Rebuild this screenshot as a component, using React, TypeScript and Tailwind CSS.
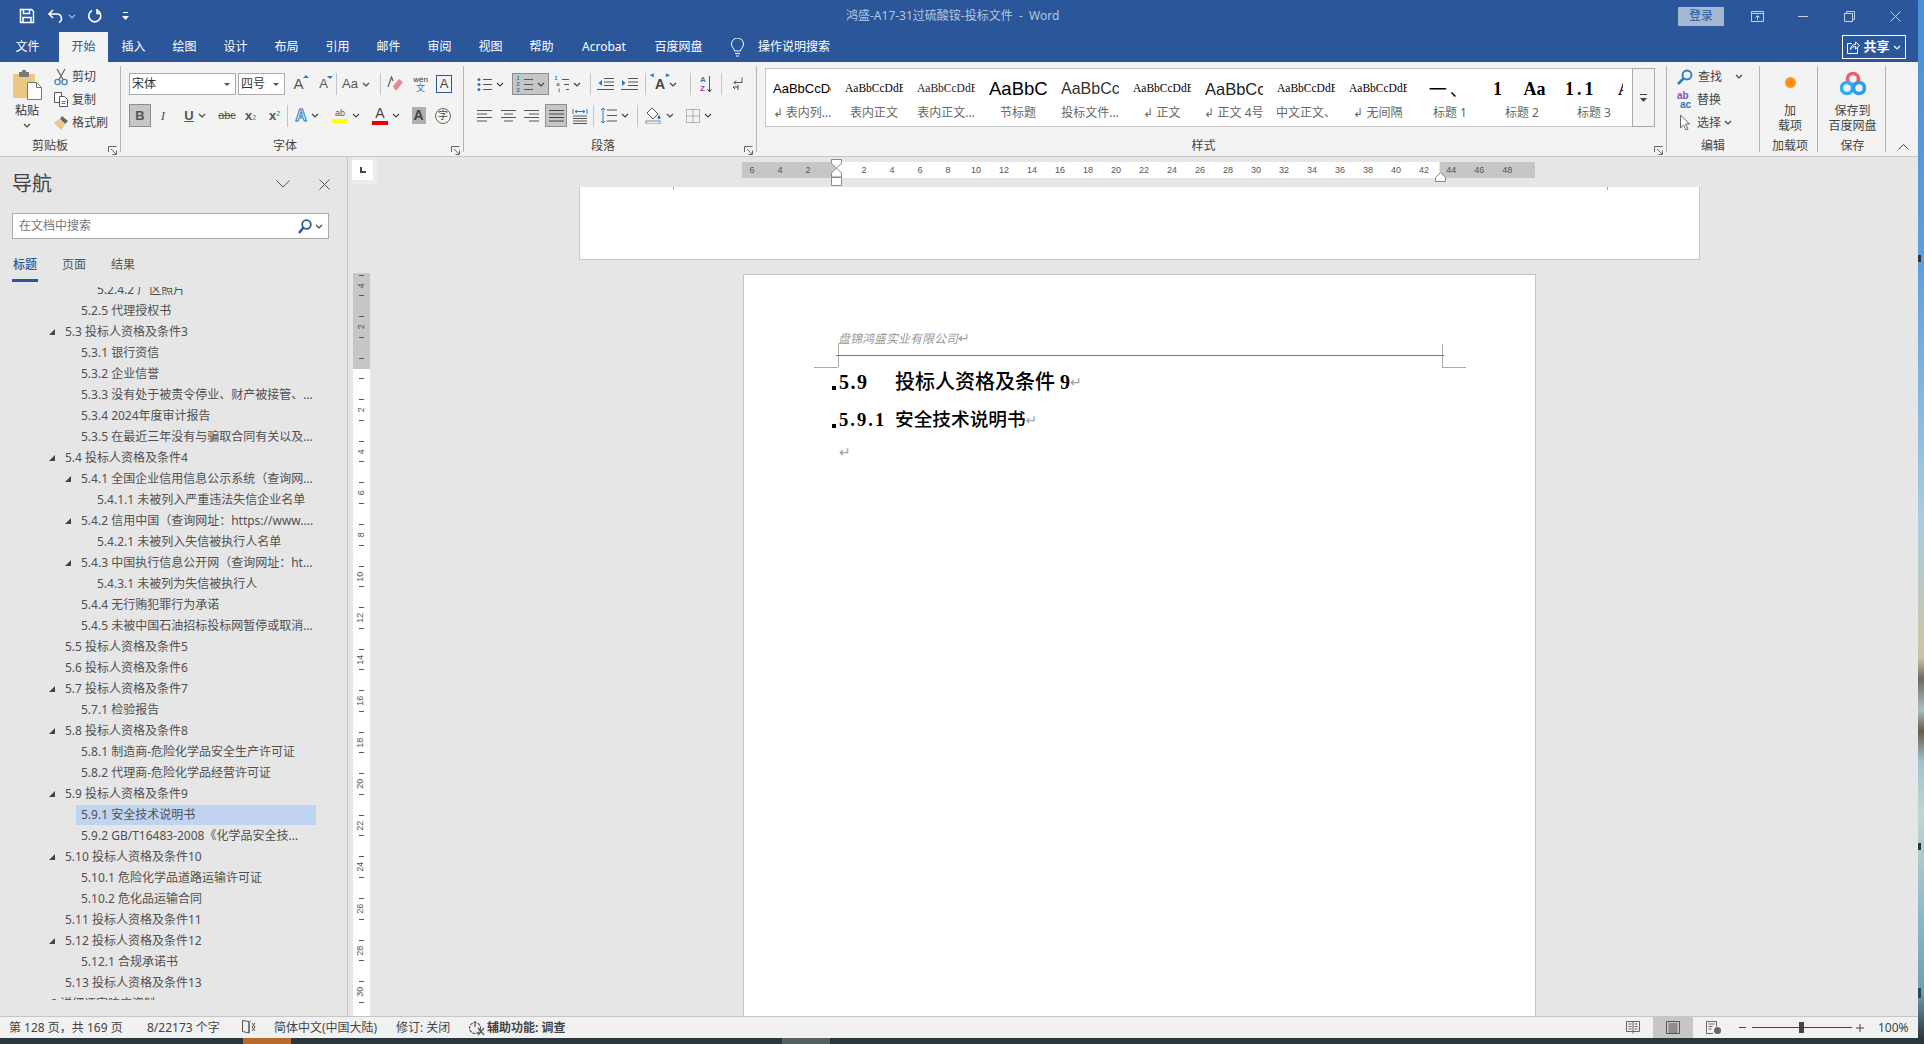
import React from 'react';

const UI = "[font-family:'Noto_Sans','Noto_Sans_CJK_SC',sans-serif]";
const ARIAL = "[font-family:'Liberation_Sans','Noto_Sans_CJK_SC',sans-serif]";
const SERIF = "[font-family:'Liberation_Serif','Noto_Sans_CJK_SC',serif]";

const Chev = ({ color = '#444' }: { color?: string }) => (
  <svg width="8" height="5" viewBox="0 0 8 5" className="shrink-0" fill="none" stroke={color} strokeWidth="1.2">
    <path d="M1 1l3 3 3-3" />
  </svg>
);

const Launcher = () => (
  <svg width="9" height="9" viewBox="0 0 9 9" fill="none" stroke="#666" strokeWidth="1">
    <path d="M.5 6V.5H8.5M3 3l5 5M8.5 4.5v4h-4" />
  </svg>
);

const Sep = () => <div className="w-px h-[22px] bg-[#c6c6c6] shrink-0" />;

const Slot = ({ className, children }: { className: string; children: React.ReactNode }) => (
  <div className={`flex items-center justify-center shrink-0 h-full gap-[4px] ${className}`}>{children}</div>
);

const Lines = ({ rows, color = '#555' }: { rows: string[]; color?: string }) => (
  <svg width="17" height="15" viewBox="0 0 17 15" fill="none" stroke={color} strokeWidth="1">
    {rows.map((d, i) => <path key={i} d={d} />)}
  </svg>
);

const Group = ({ width, label, labelClass = '', launcher, children }: { width: string; label: string; labelClass?: string; launcher?: boolean; children: React.ReactNode }) => (
  <div className="flex shrink-0">
    <div className={`relative flex flex-col ${width}`}>
      <div className="h-[75px]">{children}</div>
      <div className={`h-[18px] flex items-center justify-center text-[12px] text-[#444] ${labelClass}`}>{label}</div>
      {launcher && <div className="absolute right-[3px] bottom-[1px]"><Launcher /></div>}
    </div>
    <div className="w-px my-[4px] bg-[#b4b4b4]" />
  </div>
);

const TitleBar = () => (
  <div className="h-[32px] flex items-center text-white shrink-0">
    <Slot className="w-[18px] ml-[18px]">
      <svg width="16" height="16" viewBox="0 0 16 16" fill="none" stroke="#fff" strokeWidth="1.5">
        <path d="M1.5 1.5h11l2 2v11h-13zM4.5 1.5v4h6v-4M4 14.5v-5h8v5" />
      </svg>
    </Slot>
    <Slot className="w-[18px] ml-[10px]">
      <svg width="17" height="16" viewBox="0 0 17 16" fill="none" stroke="#fff" strokeWidth="1.6">
        <path d="M6 2L2 6l4 4M2 6h8a4.500 4.500 0 0 1 2 8.500" />
      </svg>
    </Slot>
    <Slot className="w-[8px] ml-[4px]"><Chev color="#a9bcd8" /></Slot>
    <Slot className="w-[18px] ml-[10px]">
      <svg width="16" height="16" viewBox="0 0 16 16" fill="none" stroke="#fff" strokeWidth="1.6">
        <path d="M5 2.500a6 6 0 1 0 5.500 0M10 1v4.500h4" />
      </svg>
    </Slot>
    <Slot className="w-[8px] ml-[17px]">
      <svg width="7" height="8" viewBox="0 0 7 8" fill="#fff"><path d="M1 0h5v1H1zM0 4h7L3.500 8z" /></svg>
    </Slot>
    <div className="ml-[717px] text-[12px] text-[#b4c5de] whitespace-pre">鸿盛-A17-31过硫酸铵-投标文件  -  Word</div>
    <div className="ml-auto mr-[10px] w-[46px] h-[19px] rounded-[1px] bg-[#a4b8d4] text-[#2b579a] text-[12px] flex items-center justify-center">登录</div>
    <Slot className="w-[46px]">
      <svg width="13" height="11" viewBox="0 0 13 11" fill="none" stroke="#c6d3e6"><path d="M.5.500h12v10H.500zM.5 2.500h12M6.500 9V5M4.500 6.500l2-2 2 2" /></svg>
    </Slot>
    <Slot className="w-[46px]"><div className="w-[10px] h-px bg-[#c6d3e6]" /></Slot>
    <Slot className="w-[46px]">
      <svg width="11" height="11" viewBox="0 0 11 11" fill="none" stroke="#c6d3e6"><path d="M.5 2.500h8v8h-8zM2.500 2.500v-2h8v8h-2" /></svg>
    </Slot>
    <Slot className="w-[46px]">
      <svg width="11" height="11" viewBox="0 0 11 11" fill="none" stroke="#c6d3e6"><path d="M.5.500l10 10M10.500.500l-10 10" /></svg>
    </Slot>
  </div>
);

const tabs = [
  { name: '插入', w: 'w-[51px]' }, { name: '绘图', w: 'w-[51px]' }, { name: '设计', w: 'w-[51px]' },
  { name: '布局', w: 'w-[51px]' }, { name: '引用', w: 'w-[51px]' }, { name: '邮件', w: 'w-[51px]' },
  { name: '审阅', w: 'w-[51px]' }, { name: '视图', w: 'w-[51px]' }, { name: '帮助', w: 'w-[51px]' },
  { name: 'Acrobat', w: 'w-[74px]' }, { name: '百度网盘', w: 'w-[75px]' },
];

const TabBar = () => (
  <div className="h-[30px] flex items-stretch text-white text-[12px] shrink-0">
    <div className="w-[51px] ml-[2px] mr-[6px] flex items-center justify-center">文件</div>
    <div className="w-[49px] bg-[#f3f3f3] text-[#2b579a] flex items-center justify-center">开始</div>
    {tabs.map(t => <div key={t.name} className={`${t.w} flex items-center justify-center`}>{t.name}</div>)}
    <div className="ml-[15px] flex items-center">
      <svg width="13" height="19" viewBox="0 0 13 19" fill="none" stroke="#fff">
        <path d="M3.500 13c0-2.500-3-3.500-3-7a6 6 0 0 1 12 0c0 3.500-3 4.500-3 7zM4 15.500h5M5 18h3" />
      </svg>
    </div>
    <div className="ml-[14px] flex items-center">操作说明搜索</div>
    <div className="ml-auto mr-[12px] self-center w-[64px] h-[24px] border border-white flex items-center justify-center gap-[3px] font-bold text-[13px]">
      <svg width="13" height="14" viewBox="0 0 13 14" fill="none" stroke="#fff"><path d="M5 3.500H.5v10h10V8M3.500 9.500c0-3.500 2.500-5 5-5V2l4 3.500-4 3.500V6.500c-2 0-4 1-5 3z" /></svg>
      <span>共享</span>
      <Chev color="#fff" />
    </div>
  </div>
);

const ClipboardGroup = () => (
  <Group width="w-[120px]" label="剪贴板" labelClass="pr-[20px]" launcher>
    <div className="flex h-full">
      <div className="w-[54px] flex flex-col items-center pt-[8px]">
        <svg width="29" height="30" viewBox="0 0 29 30">
          <rect x="0" y="4" width="22" height="24" rx="1" fill="#eac883" />
          <rect x="6" y="2" width="10" height="5" fill="#7b7b7b" />
          <rect x="9" y="0" width="4" height="3" fill="#7b7b7b" />
          <path d="M14.500 12.500h9l5 5v12h-14z" fill="#fff" stroke="#777" />
          <path d="M23.500 12.500v5h5" fill="none" stroke="#777" />
        </svg>
        <div className="text-[12px] text-[#333] mt-[3px] leading-[16px]">粘贴</div>
        <div className="mt-[4px]"><Chev /></div>
      </div>
      <div className="flex flex-col pt-[3px] text-[12px] text-[#444]">
        <div className="h-[23px] flex items-center gap-[4px]">
          <svg width="14" height="18" viewBox="0 0 14 18" fill="none" stroke="#4a7fb5" strokeWidth="1.300">
            <circle cx="3.500" cy="14" r="2.600" /><circle cx="10.500" cy="14" r="2.600" /><path d="M5 11.500L11 1M9 11.500L3 1" stroke="#666" />
          </svg>
          <span>剪切</span>
        </div>
        <div className="h-[23px] flex items-center gap-[4px]">
          <svg width="14" height="15" viewBox="0 0 14 15" fill="#fff" stroke="#555"><path d="M.5.500h7v10h-7z" /><path d="M5.500 4.500h5l3 3v7h-8z" /><path d="M7.500 9.500h4M7.500 11.500h4" stroke="#2b79c2" /></svg>
          <span>复制</span>
        </div>
        <div className="h-[23px] flex items-center gap-[4px]">
          <svg width="14" height="14" viewBox="0 0 14 14"><path d="M8 0l6 5-3 3-5-5z" fill="#666" /><path d="M5 3l6 6-4 5-7-7z" fill="#eac883" /></svg>
          <span>格式刷</span>
        </div>
      </div>
    </div>
  </Group>
);

const FontGroup = () => (
  <Group width="w-[342px]" label="字体" labelClass="pr-[14px]" launcher>
    <div className={`pl-[8px] pt-[11px] text-[#555] ${ARIAL}`}>
      <div className="flex h-[22px] items-center">
        <div className={`w-[107px] h-full bg-white border border-[#ababab] flex items-center justify-between pl-[2px] pr-[5px] text-[12px] text-[#333] ${UI}`}>
          <span>宋体</span>
          <svg width="6" height="3" viewBox="0 0 6 3" fill="#555"><path d="M0 0h6L3 3z" /></svg>
        </div>
        <div className={`w-[47px] ml-[2px] h-full bg-white border border-[#ababab] flex items-center justify-between pl-[2px] pr-[5px] text-[12px] text-[#333] ${UI}`}>
          <span>四号</span>
          <svg width="6" height="3" viewBox="0 0 6 3" fill="#555"><path d="M0 0h6L3 3z" /></svg>
        </div>
        <Slot className="w-[25px] ml-[1px] text-[15px]">
          <span className="relative">A<span className="absolute -right-[5px] top-[2px] w-0 h-0 border-x-[3px] border-x-transparent border-b-[3px] border-b-[#2b79c2]" /></span>
        </Slot>
        <Slot className="w-[25px] text-[13px]">
          <span className="relative">A<span className="absolute -right-[5px] top-[2px] w-0 h-0 border-x-[3px] border-x-transparent border-t-[3px] border-t-[#2b79c2]" /></span>
        </Slot>
        <Sep />
        <Slot className="w-[38px] text-[13px]"><span>Aa</span><Chev /></Slot>
        <div className="w-[5px]" />
        <Sep />
        <Slot className="w-[28px]">
          <svg width="16" height="17" viewBox="0 0 16 17"><path d="M6 10l6-7 4 3-6 8H8z" fill="#e68a9a" /><path d="M1 11L4.500 1 6 5" fill="none" stroke="#666" strokeWidth="1.300" /></svg>
        </Slot>
        <Slot className="w-[23px]">
          <div className="flex flex-col items-center leading-[9px]">
            <span className="text-[8px] text-[#333]">wén</span>
            <span className="text-[9px] text-[#2b79c2]">文</span>
          </div>
        </Slot>
        <Slot className="w-[24px]">
          <div className="w-[16px] h-[18px] border border-[#2b579a] text-[#444] text-[13px] flex items-center justify-center">A</div>
        </Slot>
      </div>
      <div className="flex h-[23px] mt-[9px] items-center text-[13px]">
        <div className="w-[22px] h-full bg-[#c6c6c6] border border-[#8e8e8e] flex items-center justify-center font-bold">B</div>
        <Slot className="w-[24px] italic"><span className={SERIF}>I</span></Slot>
        <Slot className="w-[40px]"><span className="underline font-bold">U</span><Chev /></Slot>
        <Slot className="w-[24px] text-[11px]"><span className="line-through">abc</span></Slot>
        <Slot className="w-[23px] font-bold"><span>x<span className="text-[7px] font-normal text-[#2b79c2]">2</span></span></Slot>
        <Slot className="w-[25px] font-bold"><span>x<sup className="text-[7px] font-normal text-[#2b79c2]">2</sup></span></Slot>
        <Sep />
        <Slot className="w-[38px] text-[16px]">
          <span className="text-white [-webkit-text-stroke:1px_#2b79c2] font-bold">A</span><Chev />
        </Slot>
        <Slot className="w-[40px]">
          <div className="flex flex-col items-center">
            <span className="text-[9px] leading-[11px] text-[#555]">ab</span>
            <div className="w-[16px] h-[4px] bg-[#ffff00]" />
          </div>
          <Chev />
        </Slot>
        <Slot className="w-[40px]">
          <div className="flex flex-col items-center">
            <span className="text-[14px] leading-[13px] text-[#444]">A</span>
            <div className="w-[16px] h-[4px] bg-[#e60000] mt-[1px]" />
          </div>
          <Chev />
        </Slot>
        <Slot className="w-[25px]"><div className="w-[14px] h-[17px] bg-[#b0b0b0] text-[#444] text-[14px] font-bold flex items-center justify-center">A</div></Slot>
        <Slot className="w-[24px]">
          <div className={`w-[16px] h-[16px] rounded-full border border-[#666] text-[10px] text-[#444] flex items-center justify-center ${UI}`}>字</div>
        </Slot>
      </div>
    </div>
  </Group>
);

const ParagraphGroup = () => (
  <Group width="w-[292px]" label="段落" labelClass="pr-[14px]" launcher>
    <div className="pt-[11px] pl-[6px]">
      <div className="flex h-[22px] items-center">
        <Slot className="w-[40px]">
          <svg width="15" height="15" viewBox="0 0 15 15"><g fill="#2b79c2"><circle cx="2" cy="2.500" r="1.500" /><circle cx="2" cy="7.500" r="1.500" /><circle cx="2" cy="12.500" r="1.500" /></g><path d="M6 2.500h9M6 7.500h9M6 12.500h9" stroke="#555" /></svg>
          <Chev />
        </Slot>
        <div className={`w-[37px] ml-[2px] h-full bg-[#c6c6c6] border border-[#8e8e8e] flex items-center justify-center gap-[4px] ${ARIAL}`}>
          <div className="flex flex-col text-[6px] leading-[6px] text-[#2b79c2] font-bold"><span>1</span><span>2</span><span>3</span></div>
          <div className="flex flex-col gap-[4px]"><div className="w-[9px] h-px bg-[#555]" /><div className="w-[9px] h-px bg-[#555]" /><div className="w-[9px] h-px bg-[#555]" /></div>
          <Chev />
        </div>
        <Slot className="w-[35px] ml-[1px]">
          <div className={`flex items-center gap-[2px] ${ARIAL}`}>
            <div className="flex flex-col text-[6px] leading-[6px] text-[#2b79c2] font-bold"><span>1</span><span className="ml-[2px]">a</span><span className="ml-[4px] text-[#555]">i</span></div>
            <div className="flex flex-col gap-[4px] items-end"><div className="w-[7px] h-px bg-[#555]" /><div className="w-[5px] h-px bg-[#555]" /><div className="w-[3px] h-px bg-[#555]" /></div>
          </div>
          <Chev />
        </Slot>
        <div className="w-[5px]" />
        <Sep />
        <Slot className="w-[23px] ml-[3px]">
          <svg width="17" height="14" viewBox="0 0 17 14" fill="none"><path d="M7 1.500h10M7 5h10M7 8.500h10M0 12.500h17" stroke="#555" /><path d="M5 3L1.500 6 5 9z" fill="#2b79c2" /></svg>
        </Slot>
        <Slot className="w-[24px]">
          <svg width="17" height="14" viewBox="0 0 17 14" fill="none"><path d="M7 1.500h10M7 5h10M7 8.500h10M0 12.500h17" stroke="#555" /><path d="M1 3l3.500 3L1 9z" fill="#2b79c2" /></svg>
        </Slot>
        <div className="w-[4px]" />
        <Sep />
        <Slot className="w-[38px] ml-[1px]">
          <span className={`relative text-[14px] font-bold text-[#444] ${ARIAL}`}>A<span className="absolute -top-[4px] -left-[5px] text-[7px] text-[#2b79c2]">◂</span><span className="absolute -top-[4px] -right-[5px] text-[7px] text-[#2b79c2]">▸</span></span>
          <Chev />
        </Slot>
        <div className="w-[5px]" />
        <Sep />
        <Slot className="w-[30px]">
          <div className={`flex items-center gap-[1px] ${ARIAL}`}>
            <div className="flex flex-col text-[8px] leading-[9px] font-bold"><span className="text-[#2b79c2]">A</span><span className="text-[#8a4fb5]">Z</span></div>
            <svg width="5" height="17" viewBox="0 0 5 17" fill="none" stroke="#555"><path d="M2.500 0v16M.5 13l2 3 2-3" /></svg>
          </div>
        </Slot>
        <Sep />
        <Slot className="w-[30px]">
          <svg width="12" height="14" viewBox="0 0 12 14" fill="none" stroke="#555"><path d="M11 .5v5H3M5 3.500l-2 2 2 2" /><path d="M7 8v5M7 10H2M4 12l-2-2" stroke="#444" /></svg>
        </Slot>
      </div>
      <div className="flex h-[23px] mt-[9px] items-center">
        <Slot className="w-[24px] ml-[2px]"><Lines rows={['M1 2.500h15', 'M1 6h10', 'M1 9.500h15', 'M1 13h10']} /></Slot>
        <Slot className="w-[24px]"><Lines rows={['M1 2.500h15', 'M4 6h9', 'M1 9.500h15', 'M4 13h9']} /></Slot>
        <Slot className="w-[23px]"><Lines rows={['M1 2.500h15', 'M6 6h10', 'M1 9.500h15', 'M6 13h10']} /></Slot>
        <div className="w-[22px] ml-[2px] h-full bg-[#c6c6c6] border border-[#8e8e8e] flex items-center justify-center">
          <Lines rows={['M1 2.500h15', 'M1 6h15', 'M1 9.500h15', 'M1 13h15']} color="#444" />
        </div>
        <Slot className="w-[25px]">
          <svg width="16" height="16" viewBox="0 0 16 16" fill="none"><path d="M1 1v5M15 1v5M3 3.500h10M3 3.500l2-1.500M3 3.500L5 5M13 3.500L11 2M13 3.500L11 5" stroke="#2b79c2" /><path d="M1 8h14M1 10.500h14M1 13h14M1 15.500h14" stroke="#555" /></svg>
        </Slot>
        <div className="w-[1px]" />
        <Sep />
        <Slot className="w-[38px] ml-[1px]">
          <svg width="17" height="17" viewBox="0 0 17 17" fill="none"><path d="M7 3h10M7 8.500h10M7 14h10" stroke="#555" /><path d="M3 1v15M1 3l2-2 2 2M1 14l2 2 2-2" stroke="#2b79c2" /></svg>
          <Chev />
        </Slot>
        <div className="w-[4px]" />
        <Sep />
        <Slot className="w-[40px] ml-[1px]">
          <svg width="17" height="17" viewBox="0 0 17 17"><path d="M7 1l6 6-5 5-6-6z" fill="#fff" stroke="#555" /><path d="M14 8c2 2 2 4 0 4s-2-2 0-4z" fill="#2b79c2" /><rect x="1" y="14" width="14" height="3" fill="#f3f3f3" stroke="#888" /></svg>
          <Chev />
        </Slot>
        <Slot className="w-[40px]">
          <svg width="14" height="14" viewBox="0 0 14 14" fill="none" stroke="#777" strokeDasharray="1 1"><path d="M.5.500h13v13H.500zM7 .5v13M.5 7h13" /></svg>
          <Chev />
        </Slot>
      </div>
    </div>
  </Group>
);

const styleItems = [
  { label: '↲ 表内列...', preview: 'AaBbCcDd', cls: `text-[13px] text-black ${ARIAL}` },
  { label: '表内正文', preview: 'AaBbCcDdEe', cls: `text-[11.500px] text-black ${SERIF}` },
  { label: '表内正文...', preview: 'AaBbCcDdEe', cls: `text-[11.500px] text-[#1a1a1a] ${SERIF}` },
  { label: '节标题', preview: 'AaBbCc', cls: `text-[18.500px] text-black ${ARIAL}` },
  { label: '投标文件...', preview: 'AaBbCcDd', cls: `text-[16px] text-[#333] ${ARIAL}` },
  { label: '↲ 正文', preview: 'AaBbCcDdEe', cls: `text-[11.500px] text-black ${SERIF}` },
  { label: '↲ 正文 4号', preview: 'AaBbCcDd', cls: `text-[16.500px] text-[#222] ${ARIAL}` },
  { label: '中文正文、', preview: 'AaBbCcDdEe', cls: `text-[11.500px] text-black ${SERIF}` },
  { label: '↲ 无间隔', preview: 'AaBbCcDdEe', cls: `text-[11.500px] text-black ${SERIF}` },
  { label: '标题 1', preview: ' 一、', cls: `text-[18px] tracking-[3px] text-black ${UI}` },
  { label: '标题 2', preview: '1     Aa', cls: `text-[18px] font-bold text-black ${SERIF}` },
  { label: '标题 3', preview: '1.1   Aa', cls: `text-[18px] font-bold tracking-[3px] text-black ${SERIF}` },
];

const StylesGroup = () => (
  <Group width="w-[909px]" label="样式" labelClass="pr-[16px]" launcher>
    <div className="pl-[8px] pt-[6px]">
      <div className="flex w-[890px] h-[59px] bg-white border border-[#c6c6c6]">
        {styleItems.map(s => (
          <div key={s.label} className="w-[72px] shrink-0 flex flex-col items-center px-[7px]">
            <div className={`w-[58px] h-[37px] pt-[3px] overflow-hidden whitespace-pre flex items-center ${s.cls}`}>{s.preview}</div>
            <div className="text-[12px] text-[#666] leading-[14px] whitespace-nowrap">{s.label}</div>
          </div>
        ))}
        <div className="w-[23px] ml-auto -my-px -mr-px border border-[#aaa] bg-[#f3f3f3] flex items-center justify-center">
          <svg width="7" height="8" viewBox="0 0 7 8" fill="#444"><path d="M0 0h7v1H0zM0 4h7L3.500 8z" /></svg>
        </div>
      </div>
    </div>
  </Group>
);

const EditGroup = () => (
  <Group width="w-[92px]" label="编辑">
    <div className={`pt-[3px] pl-[10px] text-[12px] text-[#444]`}>
      <div className="h-[23px] flex items-center">
        <svg width="16" height="16" viewBox="0 0 16 16" fill="none" stroke="#2b79c2" strokeWidth="1.800"><circle cx="10" cy="6" r="4.500" /><path d="M6.500 9.500L1 15" strokeWidth="2.500" /></svg>
        <span className="ml-[5px]">查找</span>
        <span className="ml-[13px]"><Chev /></span>
      </div>
      <div className="h-[23px] flex items-center">
        <div className={`w-[16px] flex flex-col text-[10px] leading-[9px] font-bold ${ARIAL}`}>
          <span className="text-[#8a4fb5]">ab</span><span className="text-[#2b79c2] ml-[3px]">ac</span>
        </div>
        <span className="ml-[4px]">替换</span>
      </div>
      <div className="h-[23px] flex items-center">
        <svg width="16" height="17" viewBox="0 0 16 17" fill="#fff" stroke="#666"><path d="M3.500 1v13l3-3 2.500 5 2-1-2.500-5h4z" /></svg>
        <span className="ml-[4px]">选择</span>
        <span className="ml-[3px]"><Chev /></span>
      </div>
    </div>
  </Group>
);

const AddinGroup = () => (
  <Group width="w-[57px]" label="加载项" labelClass="pl-[3px]">
    <div className="flex flex-col items-center pl-[3px] text-[12px] text-[#444] leading-[15px]">
      <div className="h-[41px] flex items-center">
        <div className="w-[11px] h-[11px] rounded-full bg-[radial-gradient(#ff8400,#ffa030)]" />
      </div>
      <span>加</span>
      <span>载项</span>
    </div>
  </Group>
);

const SaveGroup = () => (
  <Group width="w-[67px]" label="保存" labelClass="pl-[2px]">
    <div className="flex flex-col items-center pl-[2px] text-[12px] text-[#444] leading-[15px]">
      <div className="h-[41px] flex items-center">
        <svg width="28" height="26" viewBox="0 0 28 26" fill="none" strokeWidth="3.600">
          <circle cx="14" cy="9" r="5.500" stroke="#ee5a72" />
          <circle cx="8" cy="18" r="5.500" stroke="#2bb1f0" />
          <circle cx="20" cy="18" r="5.500" stroke="#2b9df0" />
        </svg>
      </div>
      <span>保存到</span>
      <span>百度网盘</span>
    </div>
  </Group>
);

const Ribbon = () => (
  <div className={`relative h-[95px] bg-[#f3f3f3] border-b border-[#c6c6c6] flex shrink-0 ${UI}`}>
    <ClipboardGroup />
    <FontGroup />
    <ParagraphGroup />
    <StylesGroup />
    <EditGroup />
    <AddinGroup />
    <SaveGroup />
    <div className="ml-[12px] mt-[82px]">
      <svg width="11" height="6" viewBox="0 0 11 6" fill="none" stroke="#444"><path d="M.5 5.500l5-5 5 5" /></svg>
    </div>
  </div>
);

type TreeRow = { text: string; level: 0 | 1 | 2 | 3; arrow?: boolean; selected?: boolean };

const treeRows: TreeRow[] = [
  { text: '5.2.4.2 厂区照片', level: 3 },
  { text: '5.2.5 代理授权书', level: 2 },
  { text: '5.3 投标人资格及条件3', level: 1, arrow: true },
  { text: '5.3.1 银行资信', level: 2 },
  { text: '5.3.2 企业信誉', level: 2 },
  { text: '5.3.3 没有处于被责令停业、财产被接管、...', level: 2 },
  { text: '5.3.4 2024年度审计报告', level: 2 },
  { text: '5.3.5 在最近三年没有与骗取合同有关以及...', level: 2 },
  { text: '5.4 投标人资格及条件4', level: 1, arrow: true },
  { text: '5.4.1 全国企业信用信息公示系统（查询网...', level: 2, arrow: true },
  { text: '5.4.1.1 未被列入严重违法失信企业名单', level: 3 },
  { text: '5.4.2 信用中国（查询网址：https://www....', level: 2, arrow: true },
  { text: '5.4.2.1 未被列入失信被执行人名单', level: 3 },
  { text: '5.4.3 中国执行信息公开网（查询网址：ht...', level: 2, arrow: true },
  { text: '5.4.3.1 未被列为失信被执行人', level: 3 },
  { text: '5.4.4 无行贿犯罪行为承诺', level: 2 },
  { text: '5.4.5 未被中国石油招标投标网暂停或取消...', level: 2 },
  { text: '5.5 投标人资格及条件5', level: 1 },
  { text: '5.6 投标人资格及条件6', level: 1 },
  { text: '5.7 投标人资格及条件7', level: 1, arrow: true },
  { text: '5.7.1 检验报告', level: 2 },
  { text: '5.8 投标人资格及条件8', level: 1, arrow: true },
  { text: '5.8.1 制造商-危险化学品安全生产许可证', level: 2 },
  { text: '5.8.2 代理商-危险化学品经营许可证', level: 2 },
  { text: '5.9 投标人资格及条件9', level: 1, arrow: true },
  { text: '5.9.1 安全技术说明书', level: 2, selected: true },
  { text: '5.9.2 GB/T16483-2008《化学品安全技...', level: 2 },
  { text: '5.10 投标人资格及条件10', level: 1, arrow: true },
  { text: '5.10.1 危险化学品道路运输许可证', level: 2 },
  { text: '5.10.2 危化品运输合同', level: 2 },
  { text: '5.11 投标人资格及条件11', level: 1 },
  { text: '5.12 投标人资格及条件12', level: 1, arrow: true },
  { text: '5.12.1 合规承诺书', level: 2 },
  { text: '5.13 投标人资格及条件13', level: 1 },
  { text: '6 详细评审响应资料', level: 0 },
];

const levelPad = { 0: 'pl-[33px]', 1: 'pl-[48px]', 2: 'pl-[64px]', 3: 'pl-[80px]' };

const NavRow = ({ row }: { row: TreeRow }) => {
  if (row.selected) {
    return (
      <div className="h-[21px] pl-[76px] pr-[31px] flex items-center">
        <div className="w-full h-[20px] pl-[5px] flex items-center bg-[#c0d4f2] whitespace-nowrap">{row.text}</div>
      </div>
    );
  }
  return (
    <div className={`h-[21px] flex items-center whitespace-nowrap ${levelPad[row.level]}`}>
      <div className="w-[17px] shrink-0">
        {row.arrow && (
          <svg width="6" height="6" viewBox="0 0 6 6" fill="#444" className="block ml-[1px]"><path d="M6 0v6H0z" /></svg>
        )}
      </div>
      <div>{row.text}</div>
    </div>
  );
};

const NavPane = () => (
  <div className={`w-[348px] shrink-0 border-r border-[#c6c6c6] flex flex-col ${UI}`}>
    <div className="h-[52px] pt-[2px] flex items-center pl-[12px] shrink-0">
      <span className="text-[20px] text-[#444] whitespace-nowrap shrink-0">导航</span>
      <svg width="14" height="8" viewBox="0 0 14 8" fill="none" stroke="#555" className="ml-[224px] shrink-0"><path d="M.5.500L7 7l6.500-6.500" /></svg>
      <svg width="11" height="11" viewBox="0 0 11 11" fill="none" stroke="#555" className="ml-[29px] shrink-0"><path d="M.5.500l10 10M10.500.500l-10 10" /></svg>
    </div>
    <div className="mx-[12px] w-[317px] h-[26px] mt-[4px] bg-white border border-[#ababab] flex items-center pl-[6px] pr-[5px] text-[12px] text-[#777] shrink-0">
      <span>在文档中搜索</span>
      <svg width="14" height="15" viewBox="0 0 14 15" fill="none" stroke="#2b579a" strokeWidth="1.800" className="ml-auto"><circle cx="8.500" cy="5.500" r="4.300" /><path d="M5.500 8.500L1 14" strokeWidth="2.400" /></svg>
      <span className="ml-[3px]"><Chev /></span>
    </div>
    <div className="h-[43px] pl-[12px] flex items-end text-[12px] text-[#555] shrink-0">
      <div className="w-[26px] flex flex-col items-center text-[#2b579a] font-medium">
        <span className="leading-[18px]">标题</span>
        <div className="w-full h-[3px] bg-[#2b579a] mt-[5px]" />
      </div>
      <div className="ml-[23px] w-[26px] flex flex-col items-center">
        <span className="leading-[18px] mb-[8px]">页面</span>
      </div>
      <div className="ml-[23px] w-[26px] flex flex-col items-center">
        <span className="leading-[18px] mb-[8px]">结果</span>
      </div>
    </div>
    <div className="mt-[5px] h-[713px] overflow-hidden text-[12px] text-[#505050] shrink-0">
      <div className="-mt-[8px]">
        {treeRows.map(r => <NavRow key={r.text} row={r} />)}
      </div>
    </div>
  </div>
);

const leftNums = [6, 4, 2];
const midNums = Array.from({ length: 21 }, (_, i) => (i + 1) * 2);
const rightNums = [44, 46, 48];

const RulerNum = ({ n }: { n: number }) => (
  <div className="w-[28px] shrink-0 text-center">{n}</div>
);

const HRuler = () => (
  <div className={`relative ml-[365px] mt-[5px] w-[793px] h-[16px] flex text-[9px] leading-[16px] text-[#555] ${ARIAL}`}>
    <div className="w-[94px] bg-[#c6c6c6] flex justify-end pr-[14px]">
      {leftNums.map(n => <RulerNum key={n} n={n} />)}
    </div>
    <div className="w-[604px] bg-white flex pl-[14px]">
      {midNums.map(n => <RulerNum key={n} n={n} />)}
    </div>
    <div className="w-[95px] ml-[1px] bg-[#c6c6c6] flex">
      <div className="flex -ml-[3px]">{rightNums.map(n => <RulerNum key={n} n={n} />)}</div>
    </div>
    <svg width="11" height="28" viewBox="0 0 11 28" className="absolute left-[89px] -top-[3px]" fill="#fff" stroke="#8a8a8a">
      <path d="M.5.500h10v4L5.500 9 .5 4.500z" />
      <path d="M5.500 9l5 5v4H.5v-4z" />
      <path d="M.5 18.500h10v8H.5z" />
    </svg>
    <svg width="11" height="10" viewBox="0 0 11 10" className="absolute left-[693px] top-[10px]" fill="#fff" stroke="#8a8a8a">
      <path d="M5.500.5l5 5v4H.5v-4z" />
    </svg>
  </div>
);

const vNums: (number | null)[] = [4, 2, null, ...Array.from({ length: 15 }, (_, i) => (i + 1) * 2)];

const VRuler = () => (
  <div className={`h-[743px] w-[17px] overflow-hidden bg-[linear-gradient(#c6c6c6_96px,#ffffff_96px)] text-[9px] text-[#555] ${ARIAL}`}>
    <div className="-mt-[8.400px]">
      {vNums.map((n, i) => (
        <div key={i} className="h-[41.570px] flex flex-col items-center py-[10px]">
          <div className="w-[5px] h-px bg-[#555] shrink-0" />
          <div className="flex-1 flex items-center justify-center -rotate-90 leading-none">{n}</div>
          <div className="w-[5px] h-px bg-[#555] shrink-0" />
        </div>
      ))}
    </div>
  </div>
);

const Pilcrow = ({ className = '' }: { className?: string }) => (
  <span className={`text-[#a0a0a0] font-normal text-[14px] leading-none [font-family:'DejaVu_Sans',sans-serif] ${className}`}>↵</span>
);

const Document = () => (
  <div className="flex-1 overflow-hidden">
    <div className="relative ml-[209px] w-[1121px] h-[73px] bg-white border-x border-b border-[#c6c6c6]">
      <div className="absolute left-[93px] top-0 w-px h-[3px] bg-[#aaa]" />
      <div className="absolute left-[1027px] top-0 w-px h-[3px] bg-[#aaa]" />
    </div>
    <div className={`relative ml-[373px] mt-[14px] w-[793px] h-[760px] bg-white border border-[#c6c6c6] pl-[94px] pt-[55px] ${SERIF}`}>
      <div className="absolute left-[70px] top-[92px] w-[24px] h-px bg-[#aaa]" />
      <div className="absolute left-[94px] top-[69px] w-px h-[23px] bg-[#aaa]" />
      <div className="absolute left-[698px] top-[69px] w-px h-[23px] bg-[#aaa]" />
      <div className="absolute left-[698px] top-[92px] w-[24px] h-px bg-[#aaa]" />
      <div className="absolute left-[92px] top-[80px] w-[608px] h-px bg-[#777]" />
      <div className={`h-[18px] leading-[18px] text-[12px] italic text-[#999] ${UI}`}>盘锦鸿盛实业有限公司<Pilcrow className="not-italic text-[11px]" /></div>
      <div className="mt-[23px] h-[22px] flex items-center text-[20px] text-black">
        <div className="w-[4px] h-[4px] -ml-[6px] mt-[11px] bg-black shrink-0" />
        <div className="ml-[3px] w-[56px] font-bold tracking-[1.500px]">5.9</div>
        <div className="font-medium">投标人资格及条件</div>
        <div className="ml-[5px] font-bold">9</div>
        <Pilcrow />
      </div>
      <div className="mt-[16px] h-[22px] flex items-center text-[18.670px] text-black">
        <div className="w-[4px] h-[4px] -ml-[6px] mt-[11px] bg-black shrink-0" />
        <div className="ml-[3px] w-[56px] font-bold tracking-[2px]">5.9.1</div>
        <div className="font-medium">安全技术说明书</div>
        <Pilcrow />
      </div>
      <div className="mt-[10px] h-[22px] flex items-center"><Pilcrow className="ml-[1px]" /></div>
    </div>
  </div>
);

const Workspace = () => (
  <div className="flex-1 flex flex-col min-w-0">
    <div className="h-[30px] flex shrink-0">
      <div className="ml-[4px] w-[25px] h-[27px] bg-[#ececec] pt-[3px] pr-[4px]">
        <div className="w-[21px] h-[20px] bg-white flex items-center justify-center">
          <div className="w-[6px] h-[6px] border-l-2 border-b-2 border-[#444]" />
        </div>
      </div>
      <HRuler />
    </div>
    <div className="flex-1 flex min-h-0">
      <div className="ml-[5px] pt-[86px] shrink-0"><VRuler /></div>
      <Document />
    </div>
  </div>
);

const StatusBar = () => (
  <div className={`h-[22px] shrink-0 bg-[#f1f1f1] border-t border-[#c6c6c6] flex items-center text-[12px] text-[#444] ${UI}`}>
    <span className="ml-[9px] w-[138px] whitespace-pre">第 128 页，共 169 页</span>
    <span className="w-[93px] whitespace-pre">8/22173 个字</span>
    <svg width="16" height="15" viewBox="0 0 16 15" fill="none" stroke="#555" className="ml-[1px]"><path d="M8 1.500L1.500.5v11L8 13zM8 1.500v11.500M9 1h1M14 3l-3 4 3 4M11 3l3 4-3 4" /></svg>
    <span className="ml-[17px] w-[122px]">简体中文(中国大陆)</span>
    <span className="w-[73px] whitespace-pre">修订: 关闭</span>
    <svg width="16" height="16" viewBox="0 0 16 16" fill="none" stroke="#555" strokeWidth="1.200"><circle cx="6" cy="8" r="5.500" strokeDasharray="3 1" /><path d="M6 1v6M9 8l6 7M15 8l-6 7" /></svg>
    <span className="ml-[2px] font-bold whitespace-pre">辅助功能: 调查</span>
    <div className="ml-auto h-full flex items-center">
      <Slot className="w-[40px]">
        <svg width="14" height="13" viewBox="0 0 14 13" fill="none" stroke="#666"><path d="M.5.500h13v10h-13zM7 .5v12M2.500 3h3M2.500 5.500h3M2.500 8h3M8.500 3h3M8.500 5.500h3M8.500 8h3" /></svg>
      </Slot>
      <Slot className="w-[40px] bg-[#c6c6c6]">
        <svg width="14" height="13" viewBox="0 0 14 13" fill="none" stroke="#555"><path d="M.5.500h13v12h-13zM2.500 3h9M2.500 5h9M2.500 7h9M2.500 9h9M2.500 11h9" /></svg>
      </Slot>
      <Slot className="w-[40px]">
        <svg width="15" height="13" viewBox="0 0 15 13" fill="none" stroke="#666"><path d="M7 12.500H.5V.5h10v5M2.500 3h6M2.500 5.500h4M2.500 8h3" /><circle cx="11.500" cy="9.500" r="3.500" fill="#666" stroke="none" /></svg>
      </Slot>
      <Slot className="w-[19px]"><div className="w-[7px] h-px bg-[#444]" /></Slot>
      <div className="relative w-[100px] h-px bg-[#444]">
        <div className="absolute left-[47px] -top-[5px] w-[5px] h-[11px] bg-[#444]" />
      </div>
      <Slot className="w-[16px]">
        <svg width="8" height="8" viewBox="0 0 8 8" stroke="#444"><path d="M0 4h8M4 0v8" /></svg>
      </Slot>
      <span className="ml-[10px] mr-[8px] w-[32px] whitespace-nowrap">100%</span>
    </div>
  </div>
);

const Taskbar = () => (
  <div className="h-[6px] shrink-0 bg-[#2a373d] flex">
    <div className="ml-[243px] w-[48px] bg-[#b86a2b]" />
    <div className="ml-[491px] w-[48px] bg-[#535f60]" />
  </div>
);

const DesktopEdge = () => (
  <div className="relative w-[6px] h-full bg-[linear-gradient(#4a8fd8_0%,#5e9fdc_25%,#a9cde0_50%,#c9c7ab_61%,#c9c4a5_63%,#6d6a5e_65%,#a8c0c4_68%,#6a5a48_70%,#9fc4d0_73%,#c2d6cf_78%,#8ab8c8_88%,#6fa0b0_95%,#2a373d_99.500%)]">
    <div className="absolute left-0 top-[255px] w-[3px] h-[7px] bg-[#333]" />
    <div className="absolute left-0 top-[843px] w-[3px] h-[7px] bg-[#333]" />
    <div className="absolute left-0 top-[988px] w-[3px] h-[10px] bg-[#345]" />
  </div>
);

export default function App() {
  return (
    <div className={`w-[1924px] h-[1044px] flex overflow-hidden bg-[#e6e6e6] ${UI}`}>
      <div className="w-[1918px] h-full flex flex-col">
        <div className="bg-[#2b579a] shrink-0">
          <TitleBar />
          <TabBar />
        </div>
        <Ribbon />
        <div className="flex-1 flex min-h-0 bg-[#e6e6e6]">
          <NavPane />
          <Workspace />
        </div>
        <StatusBar />
        <Taskbar />
      </div>
      <DesktopEdge />
    </div>
  );
}
